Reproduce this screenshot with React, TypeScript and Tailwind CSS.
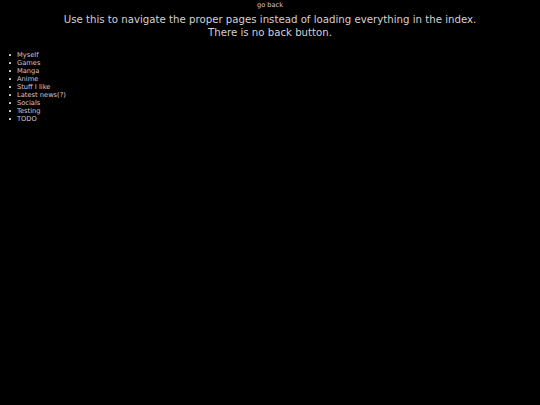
export default function App() {
  const items = ["Myself", "Games", "Manga", "Anime", "Stuff I like", "Latest news(?)", "Socials", "Testing", "TODO"];
  return (
    <div className="min-h-[405px] w-full bg-black text-[#dcc4d0]" style={{ fontFamily: '"DejaVu Sans", sans-serif' }}>
      <div className="pt-[1px] text-center text-[6.6px] leading-[8px]">go back</div>
      <div className="mt-[5px] text-center text-[10.2px] leading-[12.5px] text-[#d4d0d4]">
        Use this to navigate the proper pages instead of loading everything in the index.
        <br />
        There is no back button.
      </div>
      <ul className="mt-[11.5px] pl-[9px] text-[6.7px] leading-[8px]">
        {items.map((t) => (
          <li key={t} className="flex items-center">
            <span className="mr-[6px] h-[2px] w-[2px] shrink-0 rounded-[0.5px] bg-[#dcc4d0]" />
            <span>{t}</span>
          </li>
        ))}
      </ul>
    </div>
  );
}
